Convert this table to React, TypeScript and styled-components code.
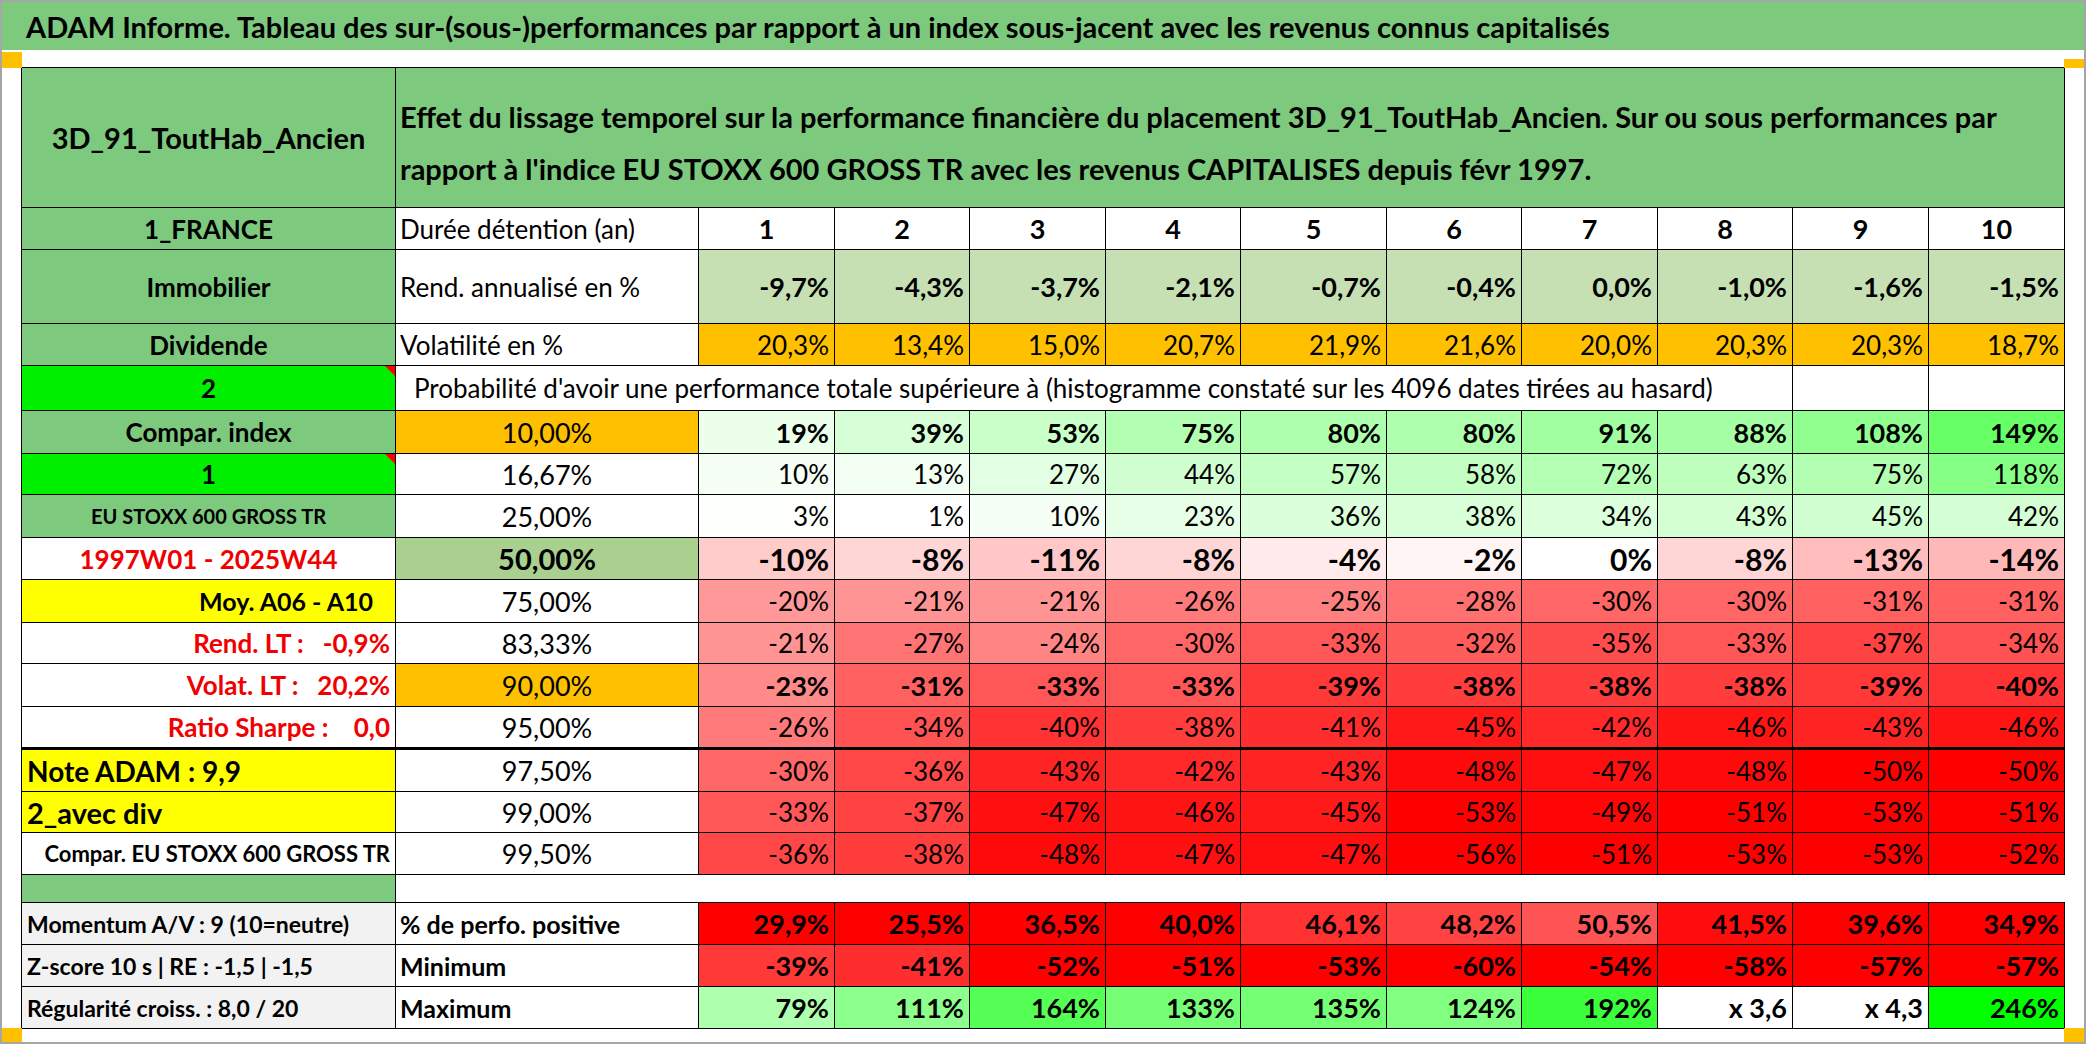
import React from "react";
import styled, { createGlobalStyle } from "styled-components";

const GREEN = "#7dc97e";
const BRIGHT = "#00f000";
const ORANGE = "#ffc000";
const YELLOW = "#ffff00";
const PALE = "#c6e0b4";
const SAGE = "#a9d08e";
const GREY = "#f2f2f2";
const RED_TEXT = "#f00000";
const LINE = "#000";

const GlobalStyle = createGlobalStyle`
  html, body {
    margin: 0;
    padding: 0;
    background: #fff;
  }
  body {
    font-family: Lato, "Liberation Sans", sans-serif;
    color: #000;
  }
`;

const Frame = styled.div`
  position: relative;
  width: 2086px;
  height: 1044px;
  box-sizing: border-box;
  border: 2px solid #a6a6a6;
  background: #fff;
  overflow: hidden;
`;

const TitleBar = styled.div`
  height: 48px;
  background: ${GREEN};
  display: flex;
  align-items: center;
  padding-left: 24px;
  font-size: 29px;
  font-weight: 700;
  white-space: nowrap;
`;

const Sheet = styled.div`
  display: grid;
  grid-template-columns: 374px 303px 136px 135px 136px 135px 146px 135px 136px 135px 136px 136px;
  grid-template-rows:
    140px 42px 74px 42px 45px 43px 41px 43px 42px 43px 41px 43px 43px 42px
    41px 42px 28px 42px 42px 42px;
  width: max-content;
  margin: 17px 0 0 19px;
  border-top: 1px solid ${LINE};
  border-left: 1px solid ${LINE};
`;

type Align = "left" | "center" | "right";

const justify = (a?: Align) =>
  a === "left" ? "flex-start" : a === "right" ? "flex-end" : "center";

const Cell = styled.div<{
  $bg?: string;
  $align?: Align;
  $span?: number;
  $open?: boolean;
  $thick?: boolean;
}>`
  position: relative;
  box-sizing: border-box;
  display: flex;
  align-items: center;
  justify-content: ${(p) => justify(p.$align)};
  grid-column: ${(p) => (p.$span ? `span ${p.$span}` : "auto")};
  background: ${(p) => p.$bg ?? "#fff"};
  border-right: ${(p) => (p.$open ? "none" : `1px solid ${LINE}`)};
  border-bottom: ${(p) => (p.$thick ? 3 : 1)}px solid ${LINE};
  padding: 0 5px;
  white-space: pre;
`;

const HeadName = styled(Cell)`
  font-size: 29px;
  font-weight: 700;
`;

const HeadText = styled(Cell)`
  font-size: 29px;
  font-weight: 700;
  line-height: 52px;
  padding: 10px 0 0 4px;
`;

const Label = styled(Cell)<{ $tone?: "red"; $size?: number; $flag?: boolean }>`
  font-size: ${(p) => p.$size ?? 26}px;
  font-weight: 700;
  color: ${(p) => (p.$tone === "red" ? RED_TEXT : "#000")};

  &::after {
    content: "";
    display: ${(p) => (p.$flag ? "block" : "none")};
    position: absolute;
    top: 0;
    right: 0;
    border-top: 10px solid #ff0000;
    border-left: 10px solid transparent;
  }
`;

const Caption = styled(Cell)<{ $indent?: boolean; $strong?: boolean }>`
  font-size: ${(p) => (p.$strong ? 25 : 26)}px;
  font-weight: ${(p) => (p.$strong ? 700 : 400)};
  padding-left: ${(p) => (p.$indent ? 18 : 4)}px;
`;

const Quantile = styled(Cell)<{ $big?: boolean }>`
  font-size: ${(p) => (p.$big ? 29 : 27)}px;
  font-weight: ${(p) => (p.$big ? 700 : 400)};
`;

const Value = styled(Cell)<{ $strong?: boolean; $big?: boolean }>`
  font-size: ${(p) => (p.$big ? 30 : p.$strong ? 27 : 26)}px;
  font-weight: ${(p) => (p.$strong || p.$big ? 700 : 400)};
`;

const Corner = styled.div<{ $x: "left" | "right"; $top: number; $h: number }>`
  position: absolute;
  ${(p) => p.$x}: -2px;
  top: ${(p) => p.$top}px;
  width: 22px;
  height: ${(p) => p.$h}px;
  background: #ffc000;
`;

const tint = (v: number) => {
  if (v < 0) {
    const g = Math.round(255 * Math.max(0, 1 + v / 50));
    return `rgb(255,${g},${g})`;
  }
  const g = Math.round(255 * Math.max(0, 1 - v / 248));
  return `rgb(${g},255,${g})`;
};

const momentumTint = (v: number) => {
  const g = Math.round(Math.min(255, Math.max(0, (v - 40) * 8)));
  return `rgb(255,${g},${g})`;
};

const years = [1, 2, 3, 4, 5, 6, 7, 8, 9, 10];
const rendement = ["-9,7%", "-4,3%", "-3,7%", "-2,1%", "-0,7%", "-0,4%", "0,0%", "-1,0%", "-1,6%", "-1,5%"];
const volatilite = ["20,3%", "13,4%", "15,0%", "20,7%", "21,9%", "21,6%", "20,0%", "20,3%", "20,3%", "18,7%"];

type ProbRow = {
  label: string;
  labelBg?: string;
  tone?: "red";
  align?: Align;
  pad?: number;
  size?: number;
  flag?: boolean;
  quantile: string;
  quantileBg?: string;
  big?: boolean;
  strong?: boolean;
  thick?: boolean;
  values: number[];
};

const probRows: ProbRow[] = [
  { label: "Compar. index", labelBg: GREEN, quantile: "10,00%", quantileBg: ORANGE, strong: true, values: [19, 39, 53, 75, 80, 80, 91, 88, 108, 149] },
  { label: "1", labelBg: BRIGHT, flag: true, quantile: "16,67%", values: [10, 13, 27, 44, 57, 58, 72, 63, 75, 118] },
  { label: "EU STOXX 600 GROSS TR", labelBg: GREEN, size: 20, quantile: "25,00%", values: [3, 1, 10, 23, 36, 38, 34, 43, 45, 42] },
  { label: "1997W01 - 2025W44", tone: "red", quantile: "50,00%", quantileBg: SAGE, big: true, values: [-10, -8, -11, -8, -4, -2, 0, -8, -13, -14] },
  { label: "Moy. A06 - A10", labelBg: YELLOW, align: "right", pad: 22, size: 25, quantile: "75,00%", values: [-20, -21, -21, -26, -25, -28, -30, -30, -31, -31] },
  { label: "Rend. LT :   -0,9%", tone: "red", align: "right", quantile: "83,33%", values: [-21, -27, -24, -30, -33, -32, -35, -33, -37, -34] },
  { label: "Volat. LT :   20,2%", tone: "red", align: "right", quantile: "90,00%", quantileBg: ORANGE, strong: true, values: [-23, -31, -33, -33, -39, -38, -38, -38, -39, -40] },
  { label: "Ratio Sharpe :    0,0", tone: "red", align: "right", quantile: "95,00%", thick: true, values: [-26, -34, -40, -38, -41, -45, -42, -46, -43, -46] },
  { label: "Note ADAM : 9,9", labelBg: YELLOW, align: "left", size: 28, quantile: "97,50%", values: [-30, -36, -43, -42, -43, -48, -47, -48, -50, -50] },
  { label: "2_avec div", labelBg: YELLOW, align: "left", size: 29, quantile: "99,00%", values: [-33, -37, -47, -46, -45, -53, -49, -51, -53, -51] },
  { label: "Compar. EU STOXX 600 GROSS TR", align: "right", size: 22, quantile: "99,50%", values: [-36, -38, -48, -47, -47, -56, -51, -53, -53, -52] },
];

const positive = ["29,9%", "25,5%", "36,5%", "40,0%", "46,1%", "48,2%", "50,5%", "41,5%", "39,6%", "34,9%"];
const minimum = [-39, -41, -52, -51, -53, -60, -54, -58, -57, -57];
const maximum: (number | string)[] = [79, 111, 164, 133, 135, 124, 192, "x 3,6", "x 4,3", 246];

const num = (s: string) => parseFloat(s.replace(",", "."));

export default function App() {
  return (
    <>
      <GlobalStyle />
      <Frame>
        <TitleBar>
          ADAM Informe. Tableau des sur-(sous-)performances par rapport à un index sous-jacent avec les revenus connus capitalisés
        </TitleBar>
        <Sheet>
          <HeadName $bg={GREEN}>3D_91_ToutHab_Ancien</HeadName>
          <HeadText $bg={GREEN} $span={11} $align="left">
            <div>
              Effet du lissage temporel sur la performance financière du placement 3D_91_ToutHab_Ancien. Sur ou sous performances par
              <br />
              rapport à l'indice EU STOXX 600 GROSS TR avec les revenus CAPITALISES depuis févr 1997.
            </div>
          </HeadText>

          <Label $bg={GREEN}>1_FRANCE</Label>
          <Caption $align="left">Durée détention (an)</Caption>
          {years.map((y) => (
            <Value key={y} $strong>
              {y}
            </Value>
          ))}

          <Label $bg={GREEN}>Immobilier</Label>
          <Caption $align="left">Rend. annualisé en %</Caption>
          {rendement.map((v, i) => (
            <Value key={i} $bg={PALE} $align="right" $strong>
              {v}
            </Value>
          ))}

          <Label $bg={GREEN}>Dividende</Label>
          <Caption $align="left">Volatilité en %</Caption>
          {volatilite.map((v, i) => (
            <Value key={i} $bg={ORANGE} $align="right">
              {v}
            </Value>
          ))}

          <Label $bg={BRIGHT} $flag>
            2
          </Label>
          <Caption $align="left" $span={9} $indent>
            Probabilité d'avoir une performance totale supérieure à (histogramme constaté sur les 4096 dates tirées au hasard)
          </Caption>
          <Value />
          <Value />

          {probRows.map((r) => (
            <React.Fragment key={r.label}>
              <Label
                $bg={r.labelBg}
                $tone={r.tone}
                $align={r.align}
                $size={r.size}
                $flag={r.flag}
                $thick={r.thick}
                style={r.pad ? { paddingRight: r.pad } : undefined}
              >
                {r.label}
              </Label>
              <Quantile $bg={r.quantileBg} $big={r.big} $thick={r.thick}>
                {r.quantile}
              </Quantile>
              {r.values.map((v, i) => (
                <Value key={i} $bg={tint(v)} $align="right" $strong={r.strong} $big={r.big} $thick={r.thick}>
                  {v}%
                </Value>
              ))}
            </React.Fragment>
          ))}

          <Label $bg={GREEN} />
          <Cell $span={11} $open />

          <Label $bg={GREY} $align="left" $size={23}>Momentum A/V : 9 (10=neutre)</Label>
          <Caption $align="left" $strong>% de perfo. positive</Caption>
          {positive.map((v, i) => (
            <Value key={i} $bg={momentumTint(num(v))} $align="right" $strong>
              {v}
            </Value>
          ))}

          <Label $bg={GREY} $align="left" $size={23}>Z-score 10 s | RE : -1,5 | -1,5</Label>
          <Caption $align="left" $strong>Minimum</Caption>
          {minimum.map((v, i) => (
            <Value key={i} $bg={tint(v)} $align="right" $strong>
              {v}%
            </Value>
          ))}

          <Label $bg={GREY} $align="left" $size={23}>Régularité croiss. : 8,0 / 20</Label>
          <Caption $align="left" $strong>Maximum</Caption>
          {maximum.map((v, i) => (
            <Value key={i} $bg={typeof v === "number" ? tint(v) : "#fff"} $align="right" $strong>
              {typeof v === "number" ? `${v}%` : v}
            </Value>
          ))}
        </Sheet>
        <Corner $x="left" $top={50} $h={16} />
        <Corner $x="right" $top={57} $h={9} />
        <Corner $x="left" $top={1026} $h={16} />
        <Corner $x="right" $top={1026} $h={16} />
      </Frame>
    </>
  );
}
